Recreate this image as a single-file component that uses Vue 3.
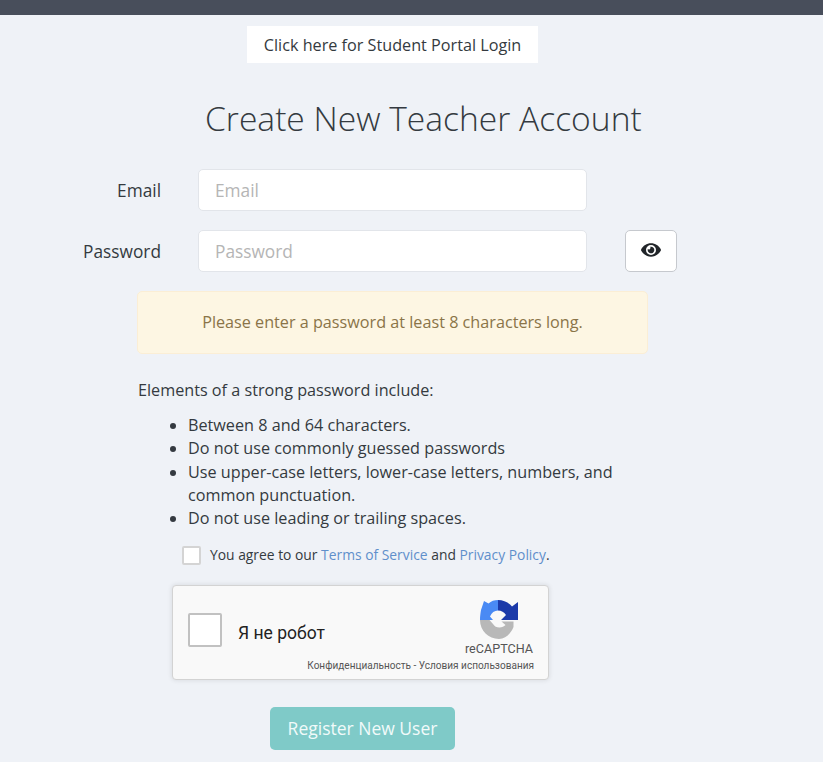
<template>
  <div class="page">
    <div class="top-bar"></div>

    <div class="portal-row">
      <a class="portal-link" href="#">Click here for Student Portal Login</a>
    </div>

    <h1 class="title">Create New Teacher Account</h1>

    <form class="form" @submit.prevent>
      <div class="field-row">
        <label class="field-label" for="email">Email</label>
        <input id="email" v-model="email" class="field-input" type="email" placeholder="Email" />
      </div>

      <div class="field-row">
        <label class="field-label" for="password">Password</label>
        <input
          id="password"
          v-model="password"
          class="field-input"
          :type="showPassword ? 'text' : 'password'"
          placeholder="Password"
        />
        <button class="eye-btn" type="button" @click="showPassword = !showPassword">
          <svg viewBox="0 0 576 512" width="20" height="18" aria-hidden="true">
            <path
              fill="#212529"
              d="M572.52 241.4C518.29 135.59 410.93 64 288 64S57.68 135.64 3.48 241.41a32.35 32.35 0 0 0 0 29.19C57.71 376.41 165.07 448 288 448s230.32-71.64 284.52-177.41a32.35 32.35 0 0 0 0-29.19zM288 400a144 144 0 1 1 144-144 143.93 143.93 0 0 1-144 144zm0-240a95.31 95.31 0 0 0-25.31 3.79 47.85 47.85 0 0 1-66.9 66.9A95.78 95.78 0 1 0 288 160z"
            />
          </svg>
        </button>
      </div>

      <div class="alert">Please enter a password at least 8 characters long.</div>

      <div class="rules">
        <p class="rules-intro">Elements of a strong password include:</p>
        <ul class="rules-list">
          <li v-for="rule in rules" :key="rule">{{ rule }}</li>
        </ul>
      </div>

      <label class="agree">
        <input v-model="agreed" class="agree-check" type="checkbox" />
        <span>You agree to our <a href="#">Terms of Service</a> and <a href="#">Privacy Policy</a>.</span>
      </label>

      <div class="captcha">
        <span class="captcha-box"></span>
        <span class="captcha-text">Я не робот</span>
        <div class="captcha-brand">
          <svg class="captcha-logo" viewBox="0 0 38 39" width="38" height="39" aria-hidden="true">
            <path fill="#b8b8b8" d="M0 20L9.500 20L13 24C14.500 26.500 16.500 27.500 19.500 27.500C22 27.500 24 26.500 25.500 25L21.500 21.500L33.500 21.500L33.500 27C30.500 34 25.500 39 19 39C8.500 39 0 30.500 0 20Z" />
            <path fill="#4a8af4" d="M18 0C14.500 0 11 1 8.500 3.500L4 1L1 10C0.500 13 0 16 0 20L13 20L10 16.500C11.500 12.500 14.500 10.500 18 10.500Z" />
            <path fill="#1c3aa9" d="M18 0C23.500 0 28.500 2.500 32 6.500L38 2L38 20L21 20L26 15C24 12 21.500 10.500 18 10.500Z" />
          </svg>
          <span class="captcha-name">reCAPTCHA</span>
        </div>
        <span class="captcha-terms">Конфиденциальность - Условия использования</span>
      </div>

      <button class="submit-btn" type="submit">Register New User</button>
    </form>
  </div>
</template>

<script setup>
import { ref } from 'vue';

const email = ref('');
const password = ref('');
const showPassword = ref(false);
const agreed = ref(false);

const rules = [
  'Between 8 and 64 characters.',
  'Do not use commonly guessed passwords',
  'Use upper-case letters, lower-case letters, numbers, and common punctuation.',
  'Do not use leading or trailing spaces.',
];
</script>

<style>
html,
body {
  margin: 0;
  background: #eff2f7;
}
</style>

<style scoped>
.page {
  height: 762px;
  overflow: hidden;
  background: #eff2f7;
  color: #343a40;
  font-family: 'Open Sans', sans-serif;
  font-size: 16.2px;
  line-height: 24px;
}

.top-bar {
  height: 15px;
  background: #484e5b;
}

.portal-row {
  display: flex;
  padding-top: 11px;
  padding-left: 247px;
}

.portal-link {
  width: 291px;
  height: 37px;
  background: #fff;
  color: #343a40;
  text-align: center;
  line-height: 38px;
  text-decoration: none;
}

.title {
  margin: 31px 0 0 205px;
  font-size: 33.6px;
  font-weight: 300;
  line-height: 48px;
  white-space: nowrap;
}

.form {
  margin-top: 27px;
}

.field-row {
  display: grid;
  grid-template-columns: 161px 389px 52px;
  column-gap: 37px;
  margin-bottom: 19px;
}

.field-row .field-input {
  grid-column: 2;
}

.field-label {
  height: 42px;
  font-size: 17.3px;
  text-align: right;
  line-height: 44px;
}

.field-input {
  box-sizing: border-box;
  width: 389px;
  height: 42px;
  padding: 0 16px;
  border: 1px solid #e2e5ea;
  border-radius: 5px;
  background: #fff;
  color: #343a40;
  font: inherit;
  font-size: 17.3px;
  outline: none;
}

.field-input::placeholder {
  color: #b5b5b5;
}

.eye-btn {
  display: flex;
  align-items: center;
  justify-content: center;
  width: 52px;
  height: 42px;
  margin-left: 1px;
  padding: 0 0 2px;
  border: 1px solid #c6c9ce;
  border-radius: 5px;
  background: #fff;
}

.alert {
  box-sizing: border-box;
  width: 511px;
  height: 63px;
  margin-left: 137px;
  border: 1px solid #fbeed5;
  border-radius: 5px;
  background: #fdf6e3;
  color: #8a7448;
  text-align: center;
  line-height: 61px;
}

.rules {
  margin: 24px 0 0 138px;
  width: 500px;
}

.rules-intro {
  margin: 0;
}

.rules-list {
  margin: 12px 0 0;
  padding-left: 50px;
  line-height: 23.25px;
}

.agree {
  display: flex;
  align-items: center;
  gap: 9px;
  margin: 15px 0 0 182px;
  font-size: 13.85px;
  line-height: 20px;
}

.agree a {
  color: #5f8fcb;
  text-decoration: none;
}

.agree-check {
  appearance: none;
  width: 19px;
  height: 19px;
  margin: 0;
  border: 2px solid #d4d4d4;
  border-radius: 2px;
  background: #fff;
}

.captcha {
  position: relative;
  box-sizing: border-box;
  display: flex;
  align-items: center;
  width: 377px;
  height: 95px;
  margin: 20px 0 0 172px;
  padding: 0 0 0 15px;
  border: 1px solid #d3d3d3;
  border-radius: 4px;
  background: #f9f9f9;
  box-shadow: 0 0 4px 1px rgba(0, 0, 0, 0.08);
  font-family: Roboto, 'Liberation Sans', sans-serif;
}

.captcha-box {
  box-sizing: border-box;
  width: 34px;
  height: 34px;
  margin-bottom: 5px;
  border: 2px solid #c1c1c1;
  border-radius: 2px;
  background: #fff;
}

.captcha-text {
  margin-left: 16px;
  font-size: 17.5px;
  color: #222;
}

.captcha-brand {
  position: absolute;
  top: 14px;
  right: 15px;
  display: flex;
  flex-direction: column;
  align-items: center;
}

.captcha-logo {
  display: block;
}

.captcha-name {
  margin-top: 3px;
  color: #555;
  font-size: 12.6px;
  line-height: 14px;
}

.captcha-terms {
  position: absolute;
  right: 14px;
  bottom: 6px;
  color: #555;
  font-size: 10.05px;
  line-height: 14px;
  white-space: nowrap;
}

.submit-btn {
  display: block;
  width: 185px;
  height: 43px;
  margin: 27px 0 0 270px;
  padding: 0 0 2px;
  border: 0;
  border-radius: 5px;
  background: #7fcac8;
  color: #f1fafa;
  font: inherit;
  font-size: 17.5px;
}
</style>
